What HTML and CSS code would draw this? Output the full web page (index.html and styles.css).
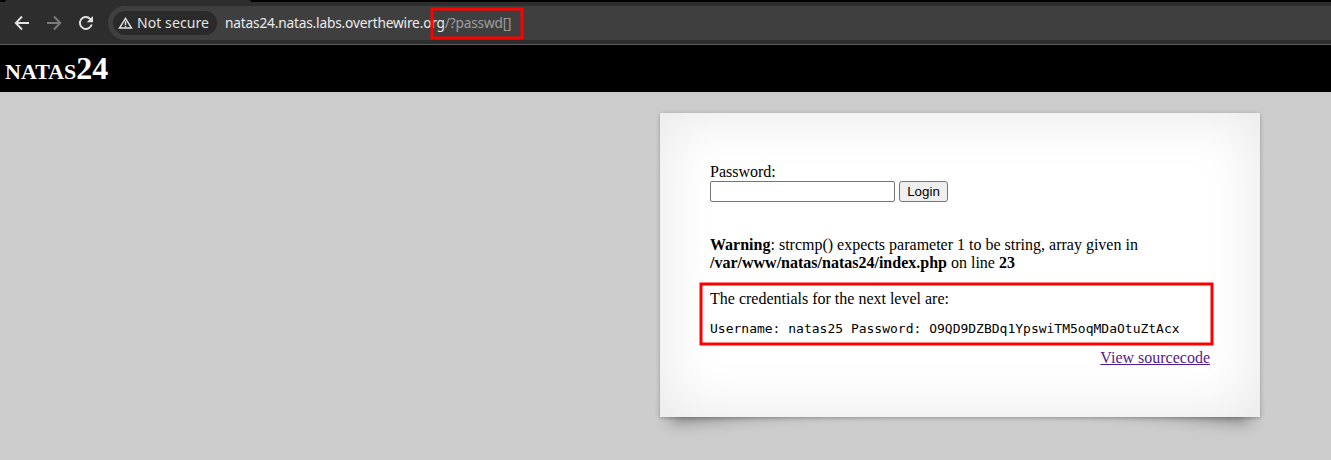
FILE: index.html
```html
<!DOCTYPE html>
<html lang="en">
<head>
<meta charset="utf-8">
<title>natas24</title>
<link rel="stylesheet" href="styles.css">
</head>
<body>
<header class="browser">
  <div class="tabstrip"><div class="active-tab"></div></div>
  <div class="toolbar">
    <nav class="nav">
      <svg class="icon" viewBox="0 0 16 16"><path d="M15 8H2M8 1.5 1.8 8 8 14.5"/></svg>
      <svg class="icon dim" viewBox="0 0 16 16"><path d="M1 8h13M8 1.5 14.2 8 8 14.5"/></svg>
      <svg class="icon" viewBox="0 0 16 16"><path d="M13.7 9.6A6 6 0 1 1 12.2 3.8L13.8 5.4"/><path class="solid" d="M15 1v6.2H8.8z"/></svg>
    </nav>
    <div class="omnibox">
      <div class="chip">
        <svg class="warn" viewBox="0 0 16 14"><path d="M8 2 14.3 12.2H1.7z"/><path class="mark" d="M8 5v4M8 9.8v1.6"/></svg>
        <span>Not secure</span>
      </div>
      <div class="url">natas24.natas.labs.overthewire.org<span class="path">/?passwd[]</span></div>
    </div>
  </div>
</header>
<h1 class="title">natas24</h1>
<main class="content">
  <form class="login">
    <div>Password:</div>
    <input class="field" type="text"> <input class="button" type="button" value="Login">
  </form>
  <p class="warning"><b>Warning</b>: strcmp() expects parameter 1 to be string, array given in <b>/var/www/natas/natas24/index.php</b> on line <b>23</b></p>
  <div>The credentials for the next level are:</div>
  <pre class="credentials">Username: natas25 Password: O9QD9DZBDq1YpswiTM5oqMDaOtuZtAcx</pre>
  <div class="source"><a href="#">View sourcecode</a></div>
</main>
<svg class="marks" viewBox="0 0 1331 460">
  <rect x="432" y="9" width="90" height="29"/>
  <rect x="701" y="284" width="511" height="60"/>
</svg>
</body>
</html>
```
FILE: styles.css
```css
body {
  margin: 0;
  height: 460px;
  overflow: hidden;
  background: #ccc;
  color: #000;
  font: 16px/18px "Liberation Serif", serif;
}
.browser {
  height: 45px;
  box-sizing: border-box;
  border-bottom: 1px solid #5c5c5c;
  background: #2d2d2d;
  font-family: "Noto Sans", sans-serif;
  color: #e3e3e3;
}
.tabstrip {
  height: 2px;
  background: #000;
}
.active-tab {
  width: 246px;
  height: 2px;
  margin-left: 5px;
  border-radius: 2px 2px 0 0;
  background: #2d2d2d;
}
.toolbar {
  display: flex;
  padding: 4px 0;
}
.nav {
  display: flex;
  align-items: center;
  gap: 16px;
  width: 94px;
  padding-left: 14px;
}
.icon {
  width: 16px;
  height: 16px;
  fill: none;
  stroke: #e3e3e3;
  stroke-width: 1.9;
}
.dim { stroke: #7b7b7b; }
.icon .solid {
  fill: #e3e3e3;
  stroke: none;
}
.omnibox {
  flex: 1;
  display: flex;
  align-items: center;
  height: 34px;
  border-radius: 17px 0 0 17px;
  background: #3f3f3f;
}
.chip {
  display: flex;
  align-items: center;
  box-sizing: border-box;
  width: 104px;
  height: 24px;
  margin-left: 5px;
  padding-left: 5px;
  gap: 4px;
  border-radius: 12px;
  background: #2a2a2a;
  font-size: 14px;
  letter-spacing: .08px;
  white-space: nowrap;
}
.warn {
  width: 15px;
  height: 14px;
  fill: none;
  stroke: #e3e3e3;
  stroke-width: 1.6;
}
.warn .mark { stroke-width: 1.5; }
.url {
  margin-left: 8px;
  font-size: 13.7px;
  letter-spacing: -.18px;
  color: #ececec;
  white-space: nowrap;
}
.path { color: #9e9e9e; }
.title {
  box-sizing: border-box;
  height: 47px;
  margin: 0;
  padding: 5px;
  background: #000;
  color: #fff;
  font-size: 32px;
  line-height: 37px;
  font-variant: small-caps;
}
.content {
  position: relative;
  box-sizing: border-box;
  width: 600px;
  height: 304px;
  margin: 21px 0 0 660px;
  padding: 50px;
  background: #fff;
  box-shadow: 0 1px 4px rgba(0, 0, 0, .27), 0 0 60px rgba(0, 0, 0, .1) inset;
}
/* Lifted paper corners */
.content::before,
.content::after {
  content: "";
  position: absolute;
  z-index: -1;
  bottom: 17px;
  width: 280px;
  height: 100px;
  box-shadow: 0 8px 16px rgba(0, 0, 0, .4);
}
.content::before {
  left: 23px;
  transform: skew(-15deg) rotate(-6deg);
}
.content::after {
  right: 23px;
  transform: skew(15deg) rotate(6deg);
}
.login { margin: 0; }
.field,
.button {
  box-sizing: border-box;
  height: 21px;
  margin: 0;
  border: 1px solid #767676;
  border-radius: 2px;
  vertical-align: top;
  font: 13.333px "Liberation Sans", sans-serif;
}
.field { width: 185px; }
.button {
  width: 49px;
  padding: 0;
  border-radius: 3px;
  background: #efefef;
  color: #000;
}
.warning { margin: 34px 0 18px; }
.credentials {
  margin: 13px 0;
  font: 13px/15px "DejaVu Sans Mono", monospace;
}
.source { text-align: right; }
.source a { color: #551a8b; }
.marks {
  position: absolute;
  top: 0;
  left: 0;
  width: 1331px;
  height: 460px;
  fill: none;
  stroke: #f00;
  stroke-width: 3;
  pointer-events: none;
}
```
